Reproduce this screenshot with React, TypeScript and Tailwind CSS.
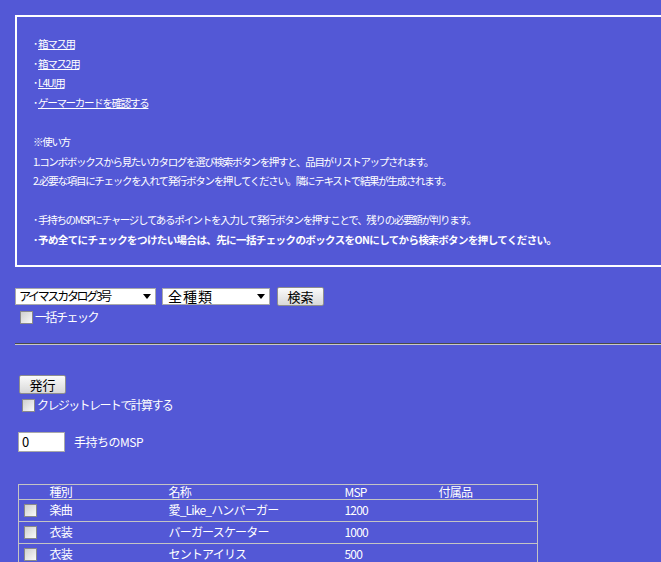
import React from "react"

const jp = { fontFamily: '"Noto Sans CJK JP", "Noto Sans", sans-serif' }

function Check() {
  return (
    <span className="inline-block w-[13px] h-[13px] border border-[#8a8a8a] bg-gradient-to-br from-[#cfcfcf] to-[#fafafa] shrink-0" />
  )
}

function Select({ label, w, text }: { label: string; w: string; text: string }) {
  return (
    <div className={`${w} h-[17px] bg-white border border-[#a9a9a9] flex items-center justify-between pl-[3px] pr-[4px] text-black leading-none`}>
      <span className={text}>{label}</span>
      <span className="w-0 h-0 border-l-[4px] border-r-[4px] border-t-[5px] border-l-transparent border-r-transparent border-t-black" />
    </div>
  )
}

function Btn({ label, w }: { label: string; w: string }) {
  return (
    <div className={`${w} h-[19px] border border-[#8e8e8e] rounded-[2px] bg-gradient-to-b from-[#fbfbfb] to-[#d8d8d8] flex items-center justify-center text-[13px] text-black leading-none`}>
      {label}
    </div>
  )
}

function Dot() {
  return <span className="inline-block w-[5px]">･</span>
}

const rows = [
  { kind: "楽曲", name: "愛_Like_ハンバーガー", msp: "1200" },
  { kind: "衣装", name: "バーガースケーター", msp: "1000" },
  { kind: "衣装", name: "セントアイリス", msp: "500" },
]

export default function App() {
  return (
    <div className="w-[661px] h-[562px] overflow-hidden bg-[#5358d6] text-white" style={jp}>
      <div className="pt-[15px] pl-[15px]">
        {/* 説明ボックス */}
        <div className="w-[700px] border-2 border-white pt-[17px] pb-[15px] pl-[16px] text-[10.5px] leading-[19.6px] tracking-[-1.3px] whitespace-nowrap">
          <div><Dot /><span className="underline">箱マス用</span></div>
          <div><Dot /><span className="underline">箱マス2用</span></div>
          <div><Dot /><span className="underline">L4U!用</span></div>
          <div><Dot /><span className="underline">ゲーマーカードを確認する</span></div>
          <div>&nbsp;</div>
          <div>※使い方</div>
          <div>1.コンボボックスから見たいカタログを選び検索ボタンを押すと、品目がリストアップされます。</div>
          <div>2.必要な項目にチェックを入れて発行ボタンを押してください。隣にテキストで結果が生成されます。</div>
          <div>&nbsp;</div>
          <div><Dot />手持ちのMSPにチャージしてあるポイントを入力して発行ボタンを押すことで、残りの必要額が判ります。</div>
          <div className="font-bold tracking-[-0.6px]"><Dot />予め全てにチェックをつけたい場合は、先に一括チェックのボックスをONにしてから検索ボタンを押してください。</div>
        </div>

        {/* 検索 */}
        <div className="mt-[20px] flex items-center gap-[6px]">
          <Select label="アイマスカタログ3号" w="w-[141px]" text="text-[12px] tracking-[-2.3px]" />
          <Select label="全種類" w="w-[108px]" text="text-[14px] tracking-[1px] ml-[2px]" />
          <div className="ml-[1px]">
            <Btn label="検索" w="w-[47px]" />
          </div>
        </div>
        <div className="mt-[5px] ml-[5px] flex items-center gap-[2px] text-[12px] tracking-[-1.5px] leading-none">
          <Check />
          <span>一括チェック</span>
        </div>

        <div className="mt-[19px] w-[700px] border-t border-t-[#4a4a4a] border-b border-b-[#c8c8c8]" />

        {/* 発行 */}
        <div className="mt-[30px] ml-[4px]">
          <Btn label="発行" w="w-[47px]" />
        </div>
        <div className="mt-[5px] ml-[7px] flex items-center gap-[2px] text-[12px] tracking-[-1.6px] leading-none">
          <Check />
          <span>クレジットレートで計算する</span>
        </div>
        <div className="mt-[20px] ml-[3px] flex items-center gap-[9px]">
          <div className="w-[47px] h-[20px] bg-white border border-[#a9a9a9] text-black text-[13px] leading-none flex items-center pl-[3px]">0</div>
          <span className="text-[12px] tracking-[-0.5px]">手持ちのMSP</span>
        </div>

        {/* 一覧 */}
        <table className="mt-[32px] ml-[3px] w-[520px] border-collapse border border-[#c4c4c4] text-[12px] tracking-[-0.8px] table-fixed">
          <colgroup>
            <col className="w-[31px]" />
            <col className="w-[119px]" />
            <col className="w-[176px]" />
            <col className="w-[94px]" />
            <col />
          </colgroup>
          <thead>
            <tr className="h-[15px] border-b border-[#c4c4c4] leading-none">
              <th className="p-0 font-normal text-left"></th>
              <th className="p-0 font-normal text-left">種別</th>
              <th className="p-0 font-normal text-left">名称</th>
              <th className="p-0 font-normal text-left">MSP</th>
              <th className="p-0 font-normal text-left">付属品</th>
            </tr>
          </thead>
          <tbody>
            {rows.map((r, i) => (
              <tr key={i} className="h-[22px] border-b border-[#c4c4c4] leading-none">
                <td className="p-0 pl-[5px] align-middle">
                  <div className="flex"><Check /></div>
                </td>
                <td className="p-0">{r.kind}</td>
                <td className="p-0">{r.name}</td>
                <td className="p-0">{r.msp}</td>
                <td className="p-0"></td>
              </tr>
            ))}
          </tbody>
        </table>
      </div>
    </div>
  )
}
